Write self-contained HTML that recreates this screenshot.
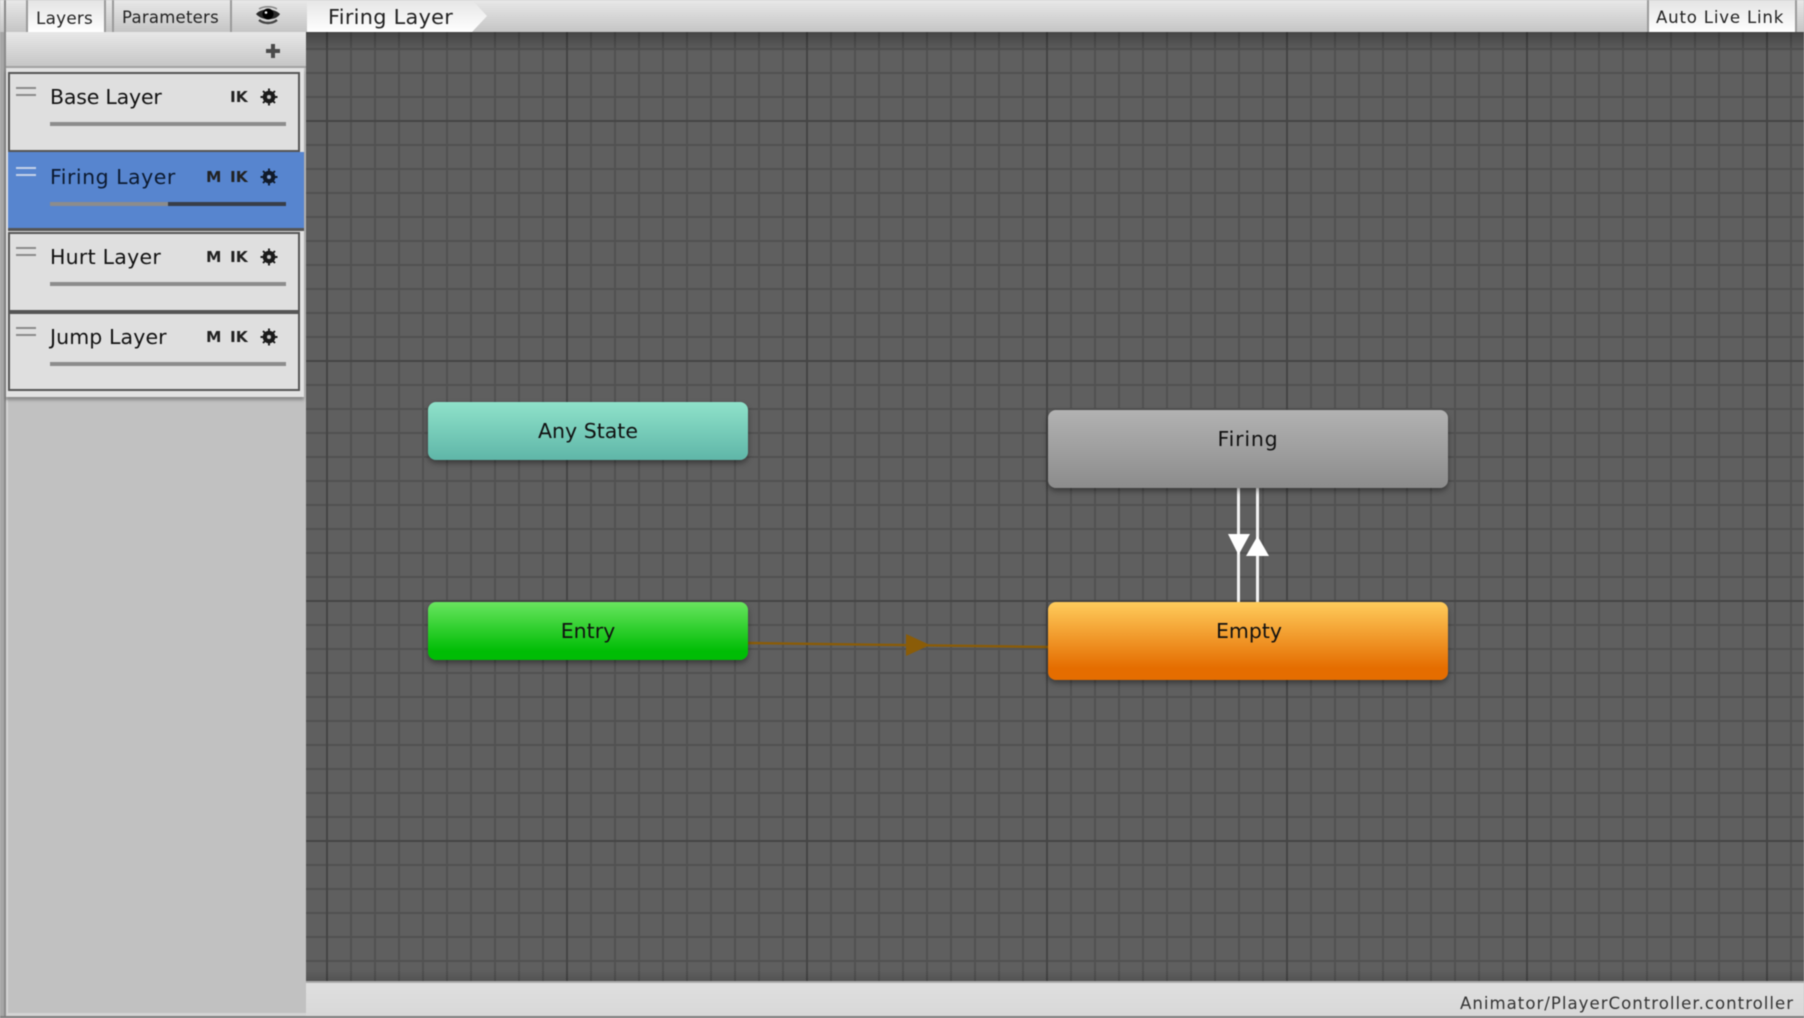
<!DOCTYPE html>
<html>
<head>
<meta charset="utf-8">
<style>
html,body{margin:0;padding:0;width:1804px;height:1018px;overflow:hidden;background:#c0c0c0}
*{box-sizing:border-box}
#w{position:relative;width:1804px;height:1018px;overflow:hidden;filter:blur(.45px);font-family:"DejaVu Sans","Liberation Sans",sans-serif;color:#111}
#w div,#w svg{position:absolute}
.t{white-space:nowrap;line-height:1}
#canvas{left:306px;top:32px;width:1498px;height:950px;background-color:#5f5f5f;
background-image:
linear-gradient(90deg,#454545 0 2px,transparent 2px),
linear-gradient(180deg,#454545 0 2px,transparent 2px),
linear-gradient(90deg,#515151 0 2px,transparent 2px),
linear-gradient(180deg,#515151 0 2px,transparent 2px);
background-size:240px 240px,240px 240px,24px 24px,24px 24px;
background-position:20px 88px,20px 88px,20px 88px,20px 88px}
#shadeT{left:306px;top:32px;width:1498px;height:20px;background:linear-gradient(180deg,rgba(0,0,0,.28),rgba(0,0,0,0))}
#shadeB{left:306px;top:970px;width:1498px;height:12px;background:linear-gradient(0deg,rgba(0,0,0,.14),rgba(0,0,0,0))}
#top{left:0;top:0;width:1804px;height:32px;background:linear-gradient(180deg,#e8e8e8,#c5c5c5)}
.row{left:8px;width:292px;height:80px;background:#dfdfdf;border:2px solid #555}
.nm{left:50px;font-size:20.5px;color:#111}
.h{left:16px;width:20px;height:2px;background:#8a8a8a}
.sl{left:50px;width:236px;height:4px;background:#8c8c8c}
.ik{left:230px;font-size:15.5px;font-weight:bold;color:#222}
.m{left:206px;font-size:15.5px;font-weight:bold;color:#222}
.node{border-radius:8px;box-shadow:0 3px 6px rgba(0,0,0,.4);text-align:center;font-size:20.5px;color:#111}
.node span{display:block;line-height:1;white-space:nowrap}
</style>
</head>
<body>
<div id="w">
  <div id="canvas"></div>
  <div id="shadeT"></div>
  <div id="shadeB"></div>

  <!-- left frame -->
  <div style="left:0;top:0;width:4px;height:1018px;background:#a6a6a6"></div>
  <div style="left:4px;top:0;width:2px;height:1018px;background:#8a8a8a"></div>
  <div style="left:6px;top:32px;width:300px;height:984px;background:#c1c1c1"></div>
  <div style="left:6px;top:400px;width:2px;height:616px;background:#d4d4d4"></div>
  <div style="left:6px;top:1013px;width:300px;height:3px;background:#d4d4d4"></div>

  <!-- top bar -->
  <div id="top"></div>
  <div style="left:4px;top:0;width:2px;height:32px;background:#8a8a8a"></div>
  <div style="left:26px;top:0;width:80px;height:32px;background:linear-gradient(180deg,#e4e4e4,#fff);border-left:2px solid #9a9a9a;border-right:2px solid #9a9a9a"></div>
  <div class="t" style="left:36px;top:10px;font-size:16.8px;letter-spacing:.25px;color:#222">Layers</div>
  <div style="left:112px;top:0;width:120px;height:32px;border-left:2px solid #9a9a9a;border-right:2px solid #9a9a9a"></div>
  <div class="t" style="left:122px;top:10px;font-size:16.5px;letter-spacing:.25px;color:#222">Parameters</div>
  <svg style="left:254px;top:6px" width="28" height="20" viewBox="0 0 28 20">
    <path d="M2 8C7 2 20 2 26 8C22 15 8 15 2 8Z" fill="#2a2a2a"/>
    <path d="M5 14C10 18 18 18 23 14" stroke="#444" stroke-width="2.4" fill="none"/>
    <path d="M5 3C10 0 18 0 23 3" stroke="#888" stroke-width="1.6" fill="none"/>
    <circle cx="14" cy="8" r="5.5" fill="#000"/>
    <circle cx="12" cy="6.5" r="1.3" fill="#fff"/>
  </svg>
  <svg style="left:306px;top:0" width="184" height="32" viewBox="0 0 184 32">
    <defs><linearGradient id="bc" x1="0" y1="0" x2="0" y2="1"><stop offset="0" stop-color="#e6e6e6"/><stop offset="1" stop-color="#fff"/></linearGradient></defs>
    <path d="M1 0H166L181 16L166 32H1Z" fill="url(#bc)"/>
  </svg>
  <div class="t" style="left:328px;top:7px;font-size:20.8px;letter-spacing:.3px;color:#222">Firing Layer</div>
  <div style="left:1647px;top:0;width:150px;height:32px;background:linear-gradient(180deg,#e4e4e4,#fff);border-left:2px solid #9a9a9a;border-right:2px solid #9a9a9a"></div>
  <div class="t" style="left:1656px;top:10px;font-size:16.6px;letter-spacing:.8px;color:#222">Auto Live Link</div>

  <!-- sub toolbar -->
  <div style="left:6px;top:32px;width:300px;height:36px;background:linear-gradient(180deg,#e8e8e8,#c6c6c6);border-bottom:2px solid #a2a2a2"></div>
  <div style="left:266px;top:49px;width:14px;height:4px;background:#4a4a4a"></div>
  <div style="left:271px;top:44px;width:4px;height:14px;background:#4a4a4a"></div>

  <!-- list -->
  <div style="left:6px;top:68px;width:298px;height:329px;background:#e2e2e2;box-shadow:0 3px 3px rgba(0,0,0,.3)"></div>

  <div class="row" style="top:72px"></div>
  <div class="row" style="top:232px"></div>
  <div class="row" style="top:311px;border-width:3px 2px 2px"></div>
  <div style="left:8px;top:152px;width:296px;height:77px;background:#5785cf"></div>
  <div style="left:8px;top:228px;width:296px;height:3px;background:#555"></div>

  <div class="h" style="top:87px"></div><div class="h" style="top:94px"></div>
  <div class="h" style="top:167px;background:#c6d3e8"></div><div class="h" style="top:174px;background:#c6d3e8"></div>
  <div class="h" style="top:247px"></div><div class="h" style="top:254px"></div>
  <div class="h" style="top:327px"></div><div class="h" style="top:334px"></div>

  <div class="t nm" style="top:87px;letter-spacing:-.2px">Base Layer</div>
  <div class="t nm" style="top:167px;letter-spacing:.5px;color:#0c1a30">Firing Layer</div>
  <div class="t nm" style="top:247px;letter-spacing:.25px">Hurt Layer</div>
  <div class="t nm" style="top:327px;letter-spacing:.1px">Jump Layer</div>

  <div class="sl" style="top:122px"></div>
  <div class="sl" style="top:202px;width:118px"></div>
  <div class="sl" style="top:202px;left:168px;width:118px;background:#383d47"></div>
  <div class="sl" style="top:282px"></div>
  <div class="sl" style="top:362px"></div>

  <div class="t ik" style="top:90px">IK</div>
  <div class="t ik" style="top:170px">IK</div><div class="t m" style="top:170px">M</div>
  <div class="t ik" style="top:250px">IK</div><div class="t m" style="top:250px">M</div>
  <div class="t ik" style="top:330px">IK</div><div class="t m" style="top:330px">M</div>

  <svg style="left:259px;top:87px" width="20" height="20" viewBox="0 0 20 20"><circle cx="10" cy="10" r="4.6" fill="none" stroke="#1a1a1a" stroke-width="3.4"/><path d="M10 1.5V18.5M1.5 10H18.5M4 4L16 16M16 4L4 16" stroke="#1a1a1a" stroke-width="1.9"/><circle cx="10" cy="10" r="2" fill="#c8c8c8"/></svg>
  <svg style="left:259px;top:167px" width="20" height="20" viewBox="0 0 20 20"><circle cx="10" cy="10" r="4.6" fill="none" stroke="#101a2a" stroke-width="3.4"/><path d="M10 1.5V18.5M1.5 10H18.5M4 4L16 16M16 4L4 16" stroke="#101a2a" stroke-width="1.9"/><circle cx="10" cy="10" r="2" fill="#7f9dd0"/></svg>
  <svg style="left:259px;top:247px" width="20" height="20" viewBox="0 0 20 20"><circle cx="10" cy="10" r="4.6" fill="none" stroke="#1a1a1a" stroke-width="3.4"/><path d="M10 1.5V18.5M1.5 10H18.5M4 4L16 16M16 4L4 16" stroke="#1a1a1a" stroke-width="1.9"/><circle cx="10" cy="10" r="2" fill="#c8c8c8"/></svg>
  <svg style="left:259px;top:327px" width="20" height="20" viewBox="0 0 20 20"><circle cx="10" cy="10" r="4.6" fill="none" stroke="#1a1a1a" stroke-width="3.4"/><path d="M10 1.5V18.5M1.5 10H18.5M4 4L16 16M16 4L4 16" stroke="#1a1a1a" stroke-width="1.9"/><circle cx="10" cy="10" r="2" fill="#c8c8c8"/></svg>

  <!-- transitions -->
  <svg style="left:0;top:0" width="1804" height="1018" viewBox="0 0 1804 1018">
    <path d="M748 643L1048 647" stroke="#8a5c08" stroke-width="2.4" fill="none"/>
    <path d="M906 634L930 645L906 656Z" fill="#8a5c08"/>
    <path d="M1238.5 488V602M1257.5 488V602" stroke="#f2f2f2" stroke-width="3" fill="none"/>
    <path d="M1228 534H1250L1238.5 555Z" fill="#fff"/>
    <path d="M1246 556H1269L1257.5 536Z" fill="#fff"/>
  </svg>

  <!-- nodes -->
  <div class="node" style="left:428px;top:402px;width:320px;height:58px;background:linear-gradient(180deg,#8fe2ca,#5fb6a8)"><span style="margin-top:19px">Any State</span></div>
  <div class="node" style="left:428px;top:602px;width:320px;height:58px;background:linear-gradient(180deg,#69e55f,#00bd05 85%)"><span style="margin-top:19px">Entry</span></div>
  <div class="node" style="left:1048px;top:410px;width:400px;height:78px;background:linear-gradient(180deg,#b2b2b2,#8c8c8c)"><span style="margin-top:19px;letter-spacing:.8px">Firing</span></div>
  <div class="node" style="left:1048px;top:602px;width:400px;height:78px;background:linear-gradient(180deg,#ffcc5c,#e56d00 85%)"><span style="margin-top:19px;padding-left:2px">Empty</span></div>

  <!-- footer -->
  <div style="left:306px;top:981px;width:1498px;height:35px;background:linear-gradient(180deg,#dfdfdf,#d8d8d8);border-top:2px solid #aaa"></div>
  <div style="left:0;top:1016px;width:1804px;height:2px;background:#7f7f7f"></div>
  <div class="t" style="left:1460px;top:996px;font-size:16.6px;letter-spacing:1px;color:#333">Animator/PlayerController.controller</div>
</div>
</body>
</html>
